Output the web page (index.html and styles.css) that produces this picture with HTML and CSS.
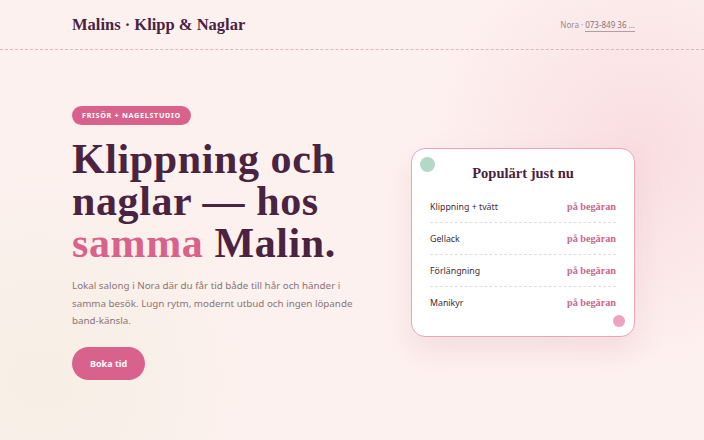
FILE: index.html
```html
<!DOCTYPE html>
<html lang="sv">
<head>
  <meta charset="UTF-8" />
  <meta name="viewport" content="width=device-width, initial-scale=1.0"/>
  <title>Malins · Klipp &amp; Naglar</title>
  <link rel="stylesheet" href="styles.css">
</head>
<body>

  <header class="topbar">
    <a class="brand" href="#">Malins · Klipp &amp; Naglar</a>
    <p class="contact">Nora · <a href="tel:073849360">073-849 36 ...</a></p>
  </header>

  <main class="hero">
    <div class="hero-text">
      <span class="badge">Frisör + Nagelstudio</span>
      <h1>Klippning och naglar — hos <em>samma</em> Malin.</h1>
      <p class="lead">Lokal salong i Nora där du får tid både till hår och händer i samma besök. Lugn rytm, modernt utbud och ingen löpande band-känsla.</p>
      <a class="btn" href="#boka">Boka tid</a>
    </div>

    <aside class="card">
      <span class="dot dot-green"></span>
      <h2>Populärt just nu</h2>
      <ul class="price-list">
        <li><span>Klippning + tvätt</span><b>på begäran</b></li>
        <li><span>Gellack</span><b>på begäran</b></li>
        <li><span>Förlängning</span><b>på begäran</b></li>
        <li><span>Manikyr</span><b>på begäran</b></li>
      </ul>
      <span class="dot dot-pink"></span>
    </aside>
  </main>

</body>
</html>
```

FILE: styles.css
```css
body {
  margin: 0;
  min-height: 440px;
  font-family: 'Noto Sans', sans-serif;
  color: #4a2340;
  background:
    radial-gradient(circle at 640px 150px, rgba(247, 205, 214, 0.55), rgba(247, 205, 214, 0) 220px),
    radial-gradient(circle at 40px 380px, rgba(246, 238, 228, 0.9), rgba(246, 238, 228, 0) 260px),
    #fdf1ef;
}
a {
  color: inherit;
}

.topbar {
  height: 49px;
  padding: 0 69px 0 72px;
  display: flex;
  align-items: center;
  justify-content: space-between;
  border-bottom: 1px dashed #e2b3bd;
}
.brand {
  font-family: 'Liberation Serif', serif;
  font-weight: bold;
  font-size: 16.5px;
  text-decoration: none;
  color: #4a2340;
}
.contact {
  margin: 0;
  font-size: 8px;
  color: #9a8a8c;
}
.contact a {
  color: #8a7478;
  text-decoration: none;
  border-bottom: 1px solid #b89aa2;
  padding-bottom: 1px;
}

.hero {
  display: grid;
  grid-template-columns: 1fr 224px;
  gap: 50px;
  align-items: center;
  padding: 56px 69px 0 72px;
}
.hero-text {
  display: flex;
  flex-direction: column;
  align-items: flex-start;
}
.badge {
  background: #d9628c;
  color: #fff;
  font-size: 7.2px;
  font-weight: bold;
  text-transform: uppercase;
  letter-spacing: 0.7px;
  padding: 5px 10px;
  border-radius: 20px;
  line-height: 9px;
}
h1 {
  margin: 13px 0 0;
  font-family: 'Liberation Serif', serif;
  font-weight: bold;
  font-size: 42px;
  line-height: 42px;
  letter-spacing: 0.6px;
  color: #4a2340;
  max-width: 290px;
}
h1 em {
  font-style: normal;
  color: #d9628c;
}
.lead {
  margin: 13px 0 0;
  font-size: 9.8px;
  line-height: 17.6px;
  color: #8a7573;
  max-width: 292px;
}
.btn {
  margin-top: 17px;
  display: inline-block;
  background: #d9628c;
  color: #fff;
  text-decoration: none;
  font-size: 9px;
  font-weight: bold;
  padding: 11px 18px;
  border-radius: 20px;
  line-height: 11px;
}

.card {
  position: relative;
  background: #fff;
  border: 1px solid #e6a8b9;
  border-radius: 14px;
  padding: 16px 18px 18px;
  box-shadow: 0 14px 30px rgba(190, 120, 130, 0.16);
}
.card h2 {
  margin: 0 0 9px;
  text-align: center;
  font-family: 'Liberation Serif', serif;
  font-weight: bold;
  font-size: 14.5px;
  color: #4a2340;
}
.dot {
  position: absolute;
  border-radius: 50%;
}
.dot-green {
  top: 8px;
  left: 8px;
  width: 15px;
  height: 15px;
  background: #b4d8c6;
}
.dot-pink {
  right: 9px;
  bottom: 9px;
  width: 12px;
  height: 12px;
  background: #eca4c0;
}
.price-list {
  list-style: none;
  margin: 0;
  padding: 0;
}
.price-list li {
  display: flex;
  justify-content: space-between;
  align-items: center;
  height: 31px;
  font-size: 8.8px;
  color: #3d2a35;
  border-bottom: 1px dashed #e2dcdc;
}
.price-list li:last-child {
  border-bottom: none;
}
.price-list b {
  font-family: 'Liberation Serif', serif;
  font-size: 10.2px;
  color: #c8688c;
}
```
